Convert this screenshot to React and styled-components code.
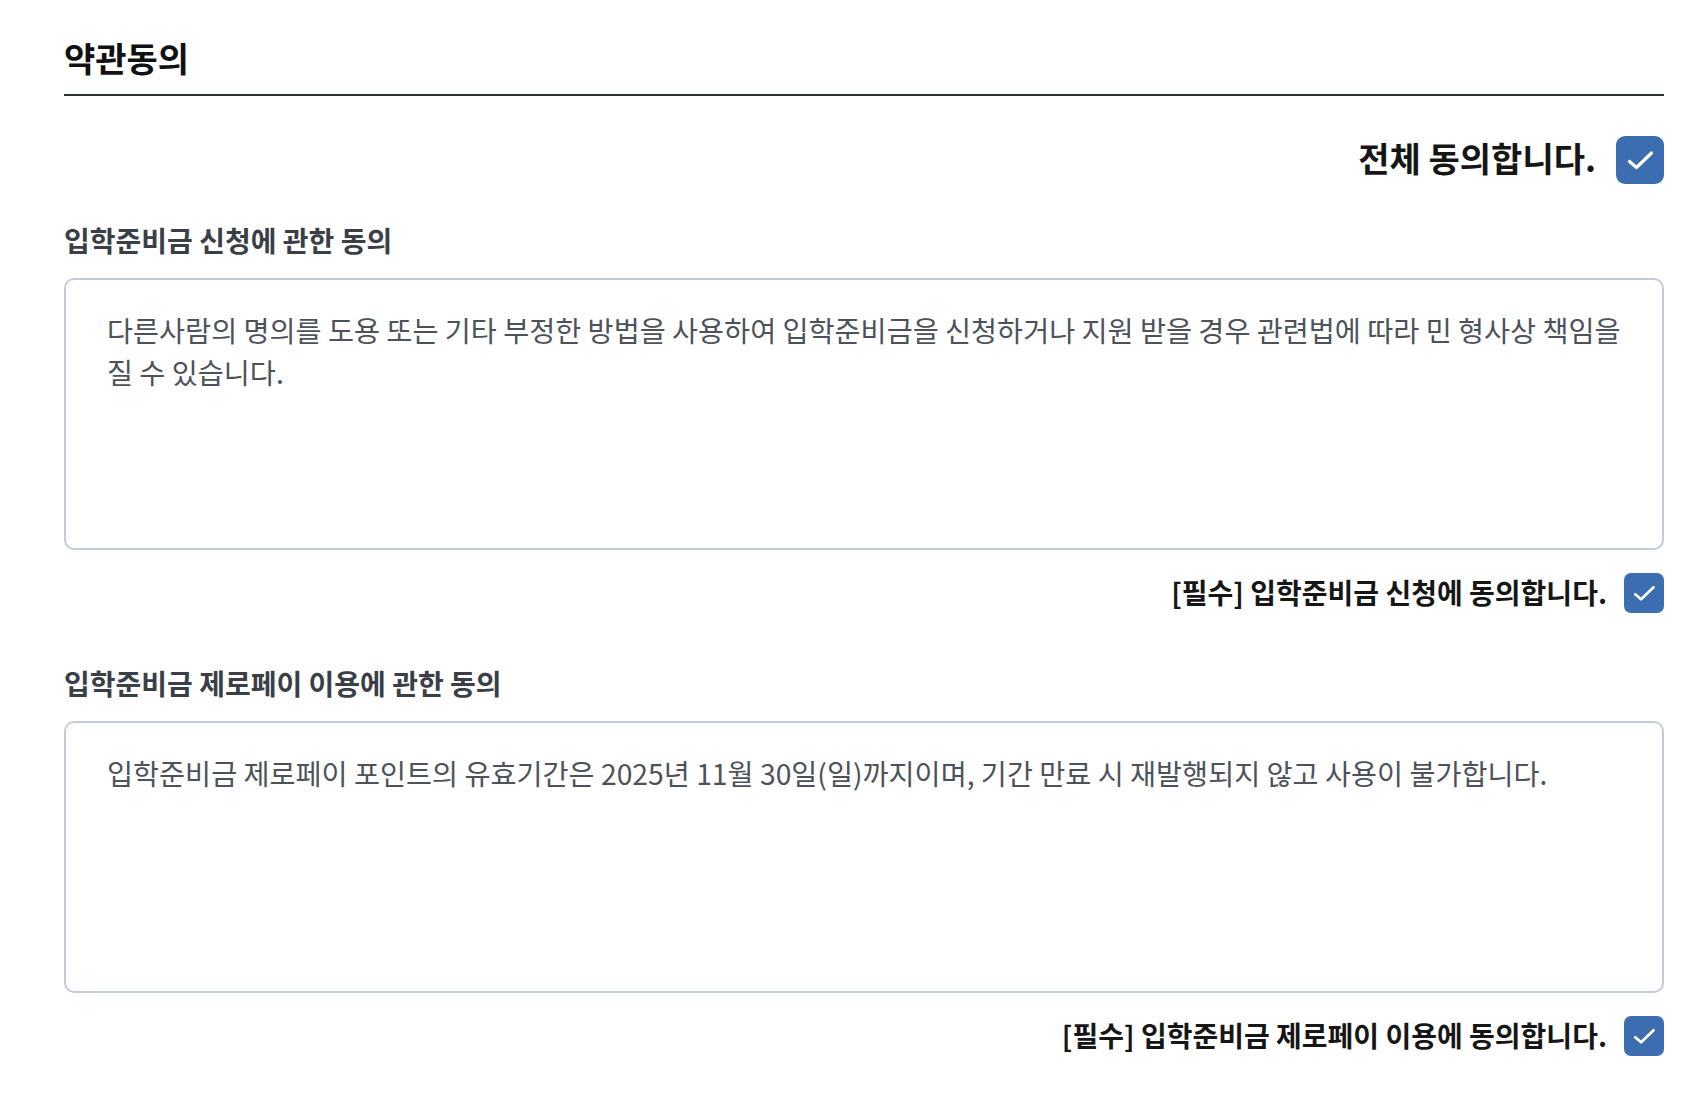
import React, { useState } from "react";
import styled, { createGlobalStyle } from "styled-components";

const GlobalStyle = createGlobalStyle`
  body {
    margin: 0;
    background: #fff;
    font-family: "Noto Sans CJK KR", "Noto Sans", sans-serif;
  }
`;

const Page = styled.main`
  padding: 35px 42px 40px 64px;
`;

const Title = styled.h2`
  margin: 0;
  padding-bottom: 13px;
  border-bottom: 2px solid #2b2f36;
  font-size: 34px;
  line-height: 46px;
  font-weight: 700;
  color: #111;
`;

const AgreeRow = styled.label`
  display: flex;
  justify-content: flex-end;
  align-items: center;
  gap: ${(props) => (props.$big ? "20px" : "17px")};
  margin-top: ${(props) => (props.$big ? "40px" : "23px")};
  cursor: pointer;
`;

const AgreeText = styled.span`
  font-size: ${(props) => (props.$big ? "34px" : "28px")};
  line-height: 1.2;
  padding-bottom: ${(props) => (props.$big ? "4px" : "0")};
  font-weight: 700;
  color: #161616;
`;

const Box = styled.span`
  display: flex;
  align-items: center;
  justify-content: center;
  flex-shrink: 0;
  width: ${(props) => props.$size}px;
  height: ${(props) => props.$size}px;
  border-radius: ${(props) => (props.$size > 44 ? "9px" : "7px")};
  background: ${(props) => (props.$checked ? "#3d6db1" : "#fff")};
  border: ${(props) => (props.$checked ? "none" : "2px solid #c3ccd9")};
  box-sizing: border-box;
`;

const Section = styled.section`
  margin-top: ${(props) => (props.$first ? "38px" : "52px")};
`;

const Label = styled.h3`
  margin: 0 0 20px;
  font-size: 28px;
  line-height: 36px;
  font-weight: 700;
  color: #3a3f47;
`;

const Terms = styled.div`
  box-sizing: border-box;
  height: 272px;
  overflow-y: auto;
  padding: 29px 30px 29px 41px;
  border: 2px solid #c3ccd9;
  border-radius: 10px;
  font-size: 28.3px;
  line-height: 42px;
  color: #4d525a;
`;

const Check = ({ size, checked, onClick }) => (
  <Box $size={size} $checked={checked} onClick={onClick}>
    {checked && (
      <svg width={size} height={size} viewBox="0 0 48 48" fill="none">
        <path
          d="M13.5 25.5 L20.5 31.5 L35.5 17"
          stroke="#fff"
          strokeWidth="3.2"
          strokeLinecap="round"
          strokeLinejoin="round"
        />
      </svg>
    )}
  </Box>
);

const terms = [
  {
    label: "입학준비금 신청에 관한 동의",
    body:
      "다른사람의 명의를 도용 또는 기타 부정한 방법을 사용하여 입학준비금을 신청하거나 지원 받을 경우 관련법에 따라 민 형사상 책임을 질 수 있습니다.",
    agree: "[필수] 입학준비금 신청에 동의합니다.",
  },
  {
    label: "입학준비금 제로페이 이용에 관한 동의",
    body:
      "입학준비금 제로페이 포인트의 유효기간은 2025년 11월 30일(일)까지이며, 기간 만료 시 재발행되지 않고 사용이 불가합니다.",
    agree: "[필수] 입학준비금 제로페이 이용에 동의합니다.",
  },
];

export default function App() {
  const [checked, setChecked] = useState([true, true]);
  const all = checked.every(Boolean);

  const toggle = (i) => setChecked((c) => c.map((v, j) => (j === i ? !v : v)));
  const toggleAll = () => setChecked((c) => c.map(() => !all));

  return (
    <Page>
      <GlobalStyle />
      <Title>약관동의</Title>
      <AgreeRow $big>
        <AgreeText $big>전체 동의합니다.</AgreeText>
        <Check size={48} checked={all} onClick={toggleAll} />
      </AgreeRow>
      {terms.map((t, i) => (
        <Section key={t.label} $first={i === 0}>
          <Label>{t.label}</Label>
          <Terms>{t.body}</Terms>
          <AgreeRow>
            <AgreeText>{t.agree}</AgreeText>
            <Check size={40} checked={checked[i]} onClick={() => toggle(i)} />
          </AgreeRow>
        </Section>
      ))}
    </Page>
  );
}
